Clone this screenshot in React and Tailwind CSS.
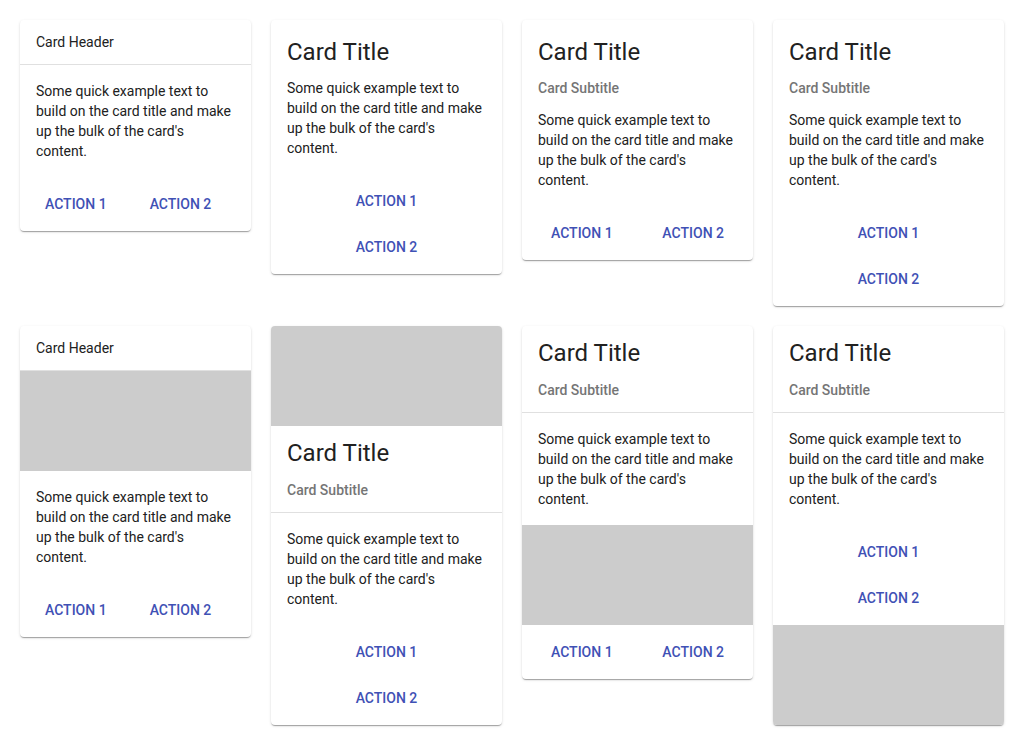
import React from "react";

const TEXT = "Some quick example text to build on the card title and make up the bulk of the card's content.";

function Card({ children }) {
  return (
    <div className="bg-white rounded overflow-hidden shadow-[0_2px_1px_-1px_rgba(0,0,0,0.2),0_1px_1px_0_rgba(0,0,0,0.14),0_1px_3px_0_rgba(0,0,0,0.12)]">
      {children}
    </div>
  );
}

function Header() {
  return (
    <div className="px-4 py-3 text-sm leading-5 text-[#212121] border-b border-[#e0e0e0]">Card Header</div>
  );
}

function Img() {
  return <div className="h-[100px] bg-[#cccccc]" />;
}

function Btn({ children }) {
  return (
    <button className="h-9 px-4 text-sm font-medium uppercase text-[#3f51b5] tracking-normal leading-9">
      {children}
    </button>
  );
}

function RowActions({ spread }) {
  return (
    <div className={"flex pt-[9px] pb-[9px] " + (spread ? "justify-between px-[13px]" : "px-[9px] gap-[11px]")}>
      <Btn>Action 1</Btn>
      <Btn>Action 2</Btn>
    </div>
  );
}

function ColActions() {
  return (
    <div className="flex flex-col items-center gap-[10px] pt-[9px] pb-[9px]">
      <Btn>Action 1</Btn>
      <Btn>Action 2</Btn>
    </div>
  );
}

function Body() {
  return <div className="p-4 text-sm leading-5 text-[#212121]">{TEXT}</div>;
}

function Title() {
  return <div className="text-2xl leading-8 font-normal text-[#212121]">Card Title</div>;
}

function Subtitle({ className = "" }) {
  return <div className={"text-sm leading-5 font-medium text-[#757575] " + className}>Card Subtitle</div>;
}

function TitleBlock() {
  return (
    <div className="px-4 pt-[11px] pb-3 border-b border-[#e0e0e0]">
      <Title />
      <Subtitle className="mt-[11px]" />
    </div>
  );
}

export default function App() {
  return (
    <div className="bg-white min-h-[745px] font-['Roboto',sans-serif]">
      <div className="grid grid-cols-4 gap-5 p-5 items-start">
        {/* Row 1 */}
        <Card>
          <Header />
          <Body />
          <RowActions />
        </Card>
        <Card>
          <div className="px-4 pt-4 pb-4">
            <Title />
            <div className="mt-[10px] text-sm leading-5 text-[#212121]">{TEXT}</div>
          </div>
          <ColActions />
        </Card>
        <Card>
          <div className="px-4 pt-4 pb-4">
            <Title />
            <Subtitle className="mt-[10px]" />
            <div className="mt-3 text-sm leading-5 text-[#212121]">{TEXT}</div>
          </div>
          <RowActions spread />
        </Card>
        <Card>
          <div className="px-4 pt-4 pb-4">
            <Title />
            <Subtitle className="mt-[10px]" />
            <div className="mt-3 text-sm leading-5 text-[#212121]">{TEXT}</div>
          </div>
          <ColActions />
        </Card>

        {/* Row 2 */}
        <Card>
          <Header />
          <Img />
          <Body />
          <RowActions />
        </Card>
        <Card>
          <Img />
          <TitleBlock />
          <Body />
          <ColActions />
        </Card>
        <Card>
          <TitleBlock />
          <Body />
          <Img />
          <RowActions spread />
        </Card>
        <Card>
          <TitleBlock />
          <Body />
          <ColActions />
          <Img />
        </Card>
      </div>
    </div>
  );
}
